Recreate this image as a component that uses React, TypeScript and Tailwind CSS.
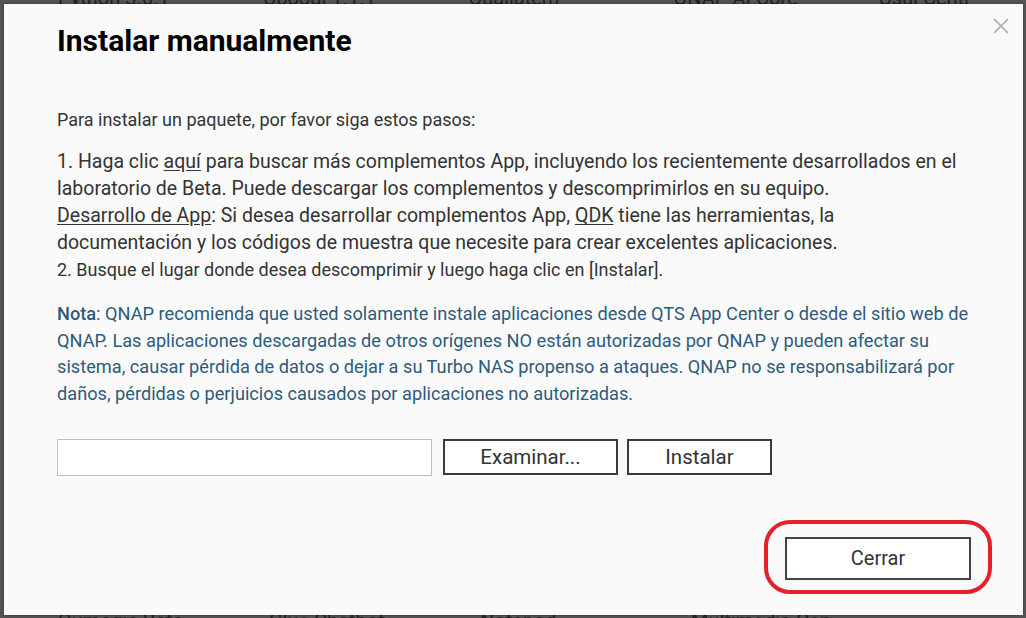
import React from "react";

export default function App() {
  const bgTop = ["Python 3.6.1", "Ubooql 1.1.1", "Qualiatem", "QNAP AI Core", "Usui Centr"];
  const bgBottom = ["Qumagie Beta", "Glue Chatbot", "Notepad", "Multimedia Con"];
  return (
    <div className="relative h-[618px] w-[1026px] overflow-hidden bg-[#555555] font-['Roboto',sans-serif]">
      <div className="absolute left-0 top-[-17px] flex w-full text-[20px] text-[#222]">
        {bgTop.map((t, i) => (
          <div key={i} className="w-[211px] pl-[58px]">{t}</div>
        ))}
      </div>
      <div className="absolute bottom-[-18px] left-0 flex w-full text-[20px] text-[#222]">
        {bgBottom.map((t, i) => (
          <div key={i} className="w-[211px] pl-[58px]">{t}</div>
        ))}
      </div>
      <div className="relative ml-[4px] mt-[4px] h-[611px] w-[1019px] bg-[#fafafa] pl-[53px] pr-[52px] shadow-[0_0_3px_rgba(0,0,0,0.4)]">
        <button className="absolute right-[14px] top-[14px] text-[#b8b8b8]" aria-label="close">
          <svg width="16" height="16" viewBox="0 0 16 16" fill="none" stroke="currentColor" strokeWidth="1.8">
            <path d="M1 1 L15 15 M15 1 L1 15" />
          </svg>
        </button>
        <div className="pt-[21px]">
          <h1 className="whitespace-nowrap text-[30px] font-bold leading-[31px] text-black">
            Instalar manualmente
          </h1>
        </div>
        <div className="mt-[52px] text-[#333]">
          <p className="text-[18px] leading-[24px]">Para instalar un paquete, por favor siga estos pasos:</p>
          <div className="mt-[16px] w-[902px] text-[19.5px] leading-[27px]">
            <p>
              1. Haga clic <span className="underline underline-offset-2">aquí</span> para buscar más complementos App, incluyendo los recientemente desarrollados en el laboratorio de Beta. Puede descargar los complementos y descomprimirlos en su equipo.
            </p>
            <p>
              <span className="underline underline-offset-2">Desarrollo de App</span>: Si desea desarrollar complementos App, <span className="underline underline-offset-2">QDK</span> tiene las herramientas, la documentación y los códigos de muestra que necesite para crear excelentes aplicaciones.
            </p>
          </div>
          <p className="mt-[1px] text-[18px] leading-[26px]">2. Busque el lugar donde desea descomprimir y luego haga clic en [Instalar].</p>
        </div>
        <p className="mt-[18px] text-[18.2px] leading-[26.7px] text-[#2d5b7c]">
          <span className="font-medium">Nota</span>: QNAP recomienda que usted solamente instale aplicaciones desde QTS App Center o desde el sitio web de QNAP. Las aplicaciones descargadas de otros orígenes NO están autorizadas por QNAP y pueden afectar su sistema, causar pérdida de datos o dejar a su Turbo NAS propenso a ataques. QNAP no se responsabilizará por daños, pérdidas o perjuicios causados por aplicaciones no autorizadas.
        </p>
        <div className="mt-[31px] flex items-center">
          <input className="h-[37px] w-[375px] border border-[#bdbdbd] bg-white outline-none" />
          <button className="ml-[11px] flex h-[36px] w-[175px] items-center justify-center border-2 border-[#3a3a3a] bg-white text-[20.5px] text-[#333]">
            Examinar...
          </button>
          <button className="ml-[9px] flex h-[36px] w-[145px] items-center justify-center border-2 border-[#3a3a3a] bg-white text-[20.5px] text-[#333]">
            Instalar
          </button>
        </div>
        <div className="mt-[61px] flex justify-end">
          <div className="relative">
            <button className="flex h-[43px] w-[186px] items-center justify-center border-2 border-[#444] bg-white text-[20px] text-[#333]">
              Cerrar
            </button>
            <div className="pointer-events-none absolute bottom-[-14px] left-[-21px] right-[-21px] top-[-17px] rounded-[26px] border-[4px] border-[#e5202a]" />
          </div>
        </div>
      </div>
    </div>
  );
}
